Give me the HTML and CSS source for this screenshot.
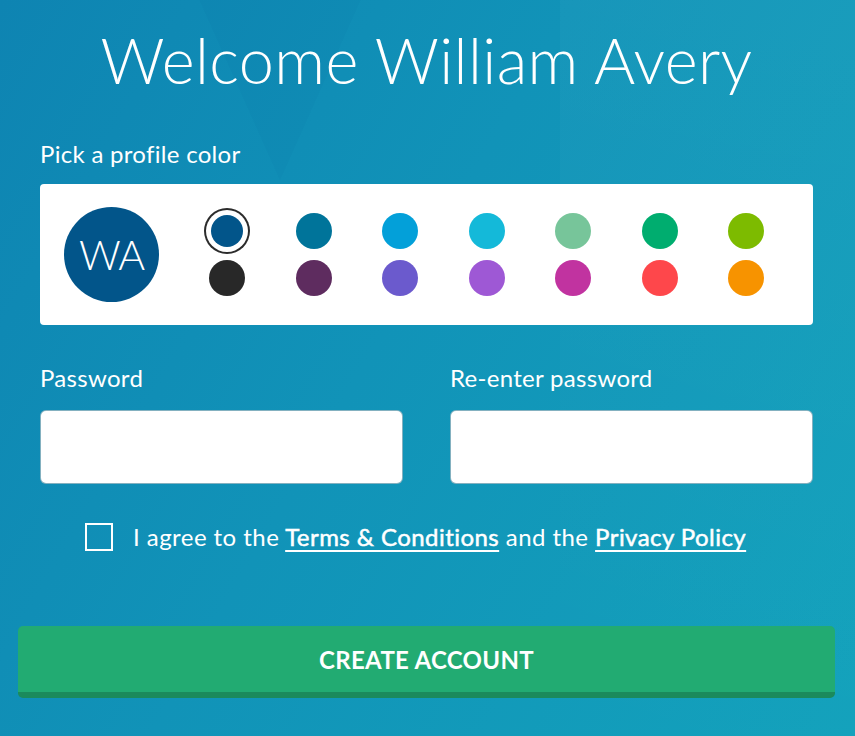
FILE: index.html
```html
<!DOCTYPE html>
<html lang="en">
<head>
<meta charset="utf-8">
<title>Create account</title>
<link rel="stylesheet" href="styles.css">
</head>
<body>
<div class="backdrop">
  <div class="bg-shape shape-a"></div>
  <div class="bg-shape shape-b"></div>
</div>
<main class="page">
  <h1 class="title">Welcome William Avery</h1>

  <div class="field-label color-label">Pick a profile color</div>
  <div class="card">
    <div class="avatar">WA</div>
    <div class="swatches">
      <span class="swatch selected" style="background:#02558a"></span>
      <span class="swatch" style="background:#00749a"></span>
      <span class="swatch" style="background:#03a0d9"></span>
      <span class="swatch" style="background:#14b9d9"></span>
      <span class="swatch" style="background:#77c59a"></span>
      <span class="swatch" style="background:#00ad6f"></span>
      <span class="swatch" style="background:#7dbb00"></span>
      <span class="swatch" style="background:#282828"></span>
      <span class="swatch" style="background:#5e2c5f"></span>
      <span class="swatch" style="background:#6b5acd"></span>
      <span class="swatch" style="background:#9e58d5"></span>
      <span class="swatch" style="background:#c133a0"></span>
      <span class="swatch" style="background:#fe474b"></span>
      <span class="swatch" style="background:#f79300"></span>
    </div>
  </div>

  <div class="passwords">
    <div class="pw-field">
      <div class="field-label">Password</div>
      <input class="input" type="password">
    </div>
    <div class="pw-field">
      <div class="field-label">Re-enter password</div>
      <input class="input" type="password">
    </div>
  </div>

  <label class="agree">
    <span class="checkbox"></span>
    <span class="agree-text">I agree to the <a href="#" class="link">Terms &amp; Conditions</a> and the <a href="#" class="link">Privacy Policy</a></span>
  </label>

  <button class="submit">CREATE ACCOUNT</button>
</main>
</body>
</html>
```

FILE: styles.css
```css
html, body {
  margin: 0;
  padding: 0;
}

body {
  width: 855px;
  height: 736px;
  overflow: hidden;
  position: relative;
  background: linear-gradient(120deg, #0e84b2 0%, #1193b8 45%, #13a2bc 100%);
  font-family: "Lato", "Open Sans", "Liberation Sans", sans-serif;
  color: #fff;
}

.backdrop {
  position: absolute;
  left: 0;
  top: 0;
  width: 855px;
  height: 736px;
  overflow: hidden;
  pointer-events: none;
}

.bg-shape {
  position: absolute;
}

.shape-a {
  left: 110px;
  top: -200px;
  width: 0;
  height: 0;
  border-left: 170px solid transparent;
  border-right: 170px solid transparent;
  border-top: 380px solid rgba(0, 60, 120, 0.03);
}

.shape-b {
  left: 560px;
  top: 0;
  width: 295px;
  height: 736px;
  background: linear-gradient(200deg, rgba(255, 255, 255, 0.03), rgba(255, 255, 255, 0));
}

.page {
  position: relative;
  padding: 0 42px 0 40px;
}

.title {
  margin: 0;
  padding-top: 22px;
  font-weight: 300;
  font-size: 63px;
  line-height: 76px;
  text-align: center;
  letter-spacing: 0.4px;
}

.field-label {
  font-size: 24px;
  line-height: 28px;
  font-weight: 400;
  letter-spacing: 0.3px;
}

.color-label {
  margin-top: 42px;
}

.card {
  margin-top: 16px;
  height: 141px;
  background: #fff;
  border-radius: 4px;
  display: flex;
  align-items: center;
  padding-left: 24px;
  gap: 25px;
}

.avatar {
  width: 95px;
  height: 95px;
  border-radius: 50%;
  background: #02558a;
  color: #fff;
  display: flex;
  align-items: center;
  justify-content: center;
  font-size: 41px;
  font-weight: 300;
  letter-spacing: -1px;
}

.swatches {
  display: grid;
  grid-template-columns: repeat(7, 86.5px);
  grid-template-rows: 47px 47px;
  place-items: center;
}

.swatch {
  width: 36px;
  height: 36px;
  border-radius: 50%;
  display: block;
}

.swatch.selected {
  width: 32px;
  height: 32px;
  box-shadow: 0 0 0 5px #fff, 0 0 0 7px #2b2b2b;
}

.passwords {
  margin-top: 39px;
  display: grid;
  grid-template-columns: 1fr 1fr;
  gap: 47px;
}

.pw-field .field-label {
  margin-bottom: 18px;
}

.input {
  display: block;
  box-sizing: border-box;
  width: 100%;
  height: 74px;
  margin: 0;
  border: 1px solid rgba(10, 100, 130, 0.5);
  border-radius: 6px;
  background: #fff;
  outline: none;
}

.agree {
  margin-top: 38px;
  margin-left: 45px;
  display: flex;
  align-items: center;
  gap: 20px;
  font-size: 24px;
  line-height: 30px;
  letter-spacing: 0.45px;
}

.checkbox {
  width: 28px;
  height: 28px;
  box-sizing: border-box;
  border: 2.5px solid #fff;
  display: block;
  flex: none;
}

.link {
  color: #fff;
  font-weight: 400;
  -webkit-text-stroke: 0.5px #fff;
  text-decoration: underline;
  text-underline-offset: 4px;
  text-decoration-thickness: 1.5px;
}

.submit {
  display: block;
  box-sizing: border-box;
  margin: 74px -22px 0;
  width: calc(100% + 44px);
  height: 72px;
  border: 0;
  border-bottom: 6px solid #1b8a5c;
  border-radius: 5px;
  background: #22ab72;
  color: #fff;
  font-family: "Lato", "Open Sans", "Liberation Sans", sans-serif;
  font-weight: 700;
  font-size: 24px;
  letter-spacing: 0.3px;
  padding: 0;
}
```
